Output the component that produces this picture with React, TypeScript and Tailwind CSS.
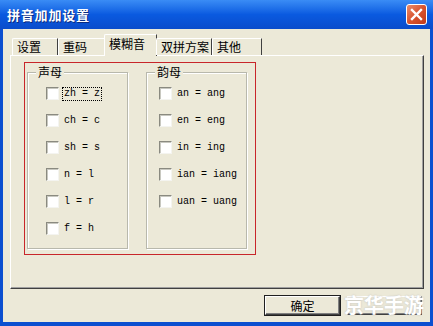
import React from "react";

const cjk = { fontFamily: '"Noto Sans CJK SC", "Noto Sans", sans-serif' };
const mono = { fontFamily: '"Liberation Mono", "Courier New", monospace' };

function Check({ label, focus }: { label: string; focus?: boolean }) {
  return (
    <div className="flex items-center h-[13px]">
      <div className="w-[13px] h-[13px] bg-white border-t border-l border-t-[#8a8a80] border-l-[#8a8a80] border-r border-b border-r-[#f4f4f0] border-b-[#f4f4f0] shadow-[inset_1px_1px_0_#c8c8c0]" />
      <span
        className={
          "ml-[4px] px-[1px] text-[10px] leading-[12px] text-black whitespace-pre " +
          (focus ? "outline outline-1 outline-dotted outline-black" : "")
        }
        style={mono}
      >
        {label}
      </span>
    </div>
  );
}

function Group({ title, items, padL }: { title: string; items: string[]; padL: string }) {
  return (
    <div className="relative w-[101px] h-[177px] border border-[#b8b8ac] shadow-[inset_1px_1px_0_#ffffff,1px_1px_0_#ffffff]">
      <div
        className="absolute left-[8px] top-[-9px] px-[2px] bg-[#ECE9D8] text-[12px] leading-[16px] text-black"
        style={cjk}
      >
        {title}
      </div>
      <div className={"flex flex-col gap-[14px] pt-[14px] " + padL}>
        {items.map((it, i) => (
          <Check key={it} label={it} focus={i === 0 && title === "声母"} />
        ))}
      </div>
    </div>
  );
}

export default function App() {
  const tabs = ["设置", "重码", "模糊音", "双拼方案", "其他"];
  const widths = ["w-[46px]", "w-[47px]", "w-[53px]", "w-[56px]", "w-[50px]"];
  return (
    <div className="w-[433px] h-[326px] bg-[#0B4FD0] flex flex-col overflow-hidden relative">
      {/* Title bar */}
      <div className="h-[29px] flex items-center justify-between pl-[7px] pr-[6px] bg-gradient-to-b from-[#3A8CF5] via-[#0A5AE0] to-[#0A4CCB]">
        <span className="text-white font-bold text-[13px] tracking-[0.8px] [text-shadow:1px_1px_0_#0a2a80]" style={cjk}>
          拼音加加设置
        </span>
        <div className="w-[21px] h-[21px] rounded-[3px] border border-white bg-gradient-to-br from-[#E98C6A] via-[#D8532E] to-[#C03A1A] flex items-center justify-center">
          <svg width="13" height="13" viewBox="0 0 13 13">
            <path d="M2 2 L11 11 M11 2 L2 11" stroke="white" strokeWidth="2.4" strokeLinecap="square" />
          </svg>
        </div>
      </div>

      {/* Body */}
      <div className="flex-1 mx-[3px] mb-[4px] bg-[#ECE9D8] flex flex-col pt-[5px]">
        {/* Tabs */}
        <div className="ml-[9px] flex items-end h-[21px] relative z-10">
          {tabs.map((t, i) => {
            const sel = i === 2;
            return (
              <div
                key={t}
                className={
                  (sel
                    ? "h-[22px] -mx-[1px] bg-[#ECE9D8] -mb-[1px] pb-[3px] "
                    : "h-[17px] ") +
                  widths[i] +
                  " border-t border-l border-t-white border-l-white border-r border-r-[#404040] rounded-tl-[2px] flex items-center pl-[4px] text-[12px] text-black leading-none whitespace-nowrap overflow-hidden"
                }
                style={cjk}
              >
                {t}
              </div>
            );
          })}
        </div>
        {/* Panel */}
        <div className="ml-[7px] mr-[6px] h-[234px] border-t border-l border-t-white border-l-white border-r border-b border-r-[#404040] border-b-[#404040] shadow-[inset_-1px_-1px_0_#a0a0a0] pt-[6px] pl-[13px]">
          <div className="w-[232px] h-[193px] border border-[#C8262A] pt-[9px] pl-[2px] flex gap-[18px]">
            <Group title="声母" items={["zh = z", "ch = c", "sh = s", "n = l", "l = r", "f = h"]} padL="pl-[18px]" />
            <Group title="韵母" items={["an = ang", "en = eng", "in = ing", "ian = iang", "uan = uang"]} padL="pl-[12px]" />
          </div>
        </div>
        {/* Buttons */}
        <div className="flex-1 flex items-start justify-end pt-[7px] pr-[8px] gap-[7px]">
          <div
            className="w-[75px] h-[19px] bg-[#ECE9D8] border border-t-white border-l-white border-r-[#404040] border-b-[#404040] shadow-[inset_-1px_-1px_0_#808080,0_0_0_1px_#202020] flex items-center justify-center text-[12px] text-black"
            style={cjk}
          >
            确定
          </div>
          <div className="w-[75px] h-[19px] bg-[#ECE9D8] border border-t-white border-l-white border-r-[#404040] border-b-[#404040] shadow-[inset_-1px_-1px_0_#808080]" />
        </div>
      </div>

      {/* Watermark */}
      <div
        className="absolute left-[344px] top-[293px] text-white font-bold text-[20px] leading-[24px] [text-shadow:0_0_2px_#bbbbbb]"
        style={cjk}
      >
        京华手游
      </div>
    </div>
  );
}
